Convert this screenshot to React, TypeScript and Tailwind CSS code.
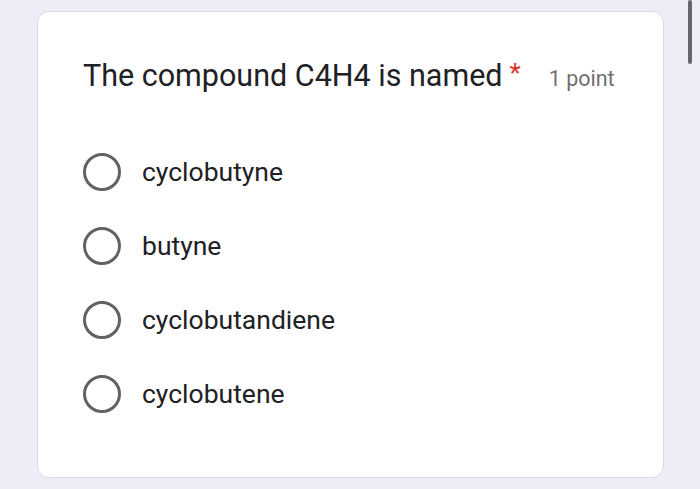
import React from "react";

const options = ["cyclobutyne", "butyne", "cyclobutandiene", "cyclobutene"];

const App: React.FC = () => {
  return (
    <div className="relative h-[489px] w-[700px] overflow-hidden bg-[#efebf7] pt-[11px] pl-[37px] font-['Roboto',sans-serif]">
      <div className="h-[467px] w-[627px] rounded-[12px] border border-[#dcd9e2] bg-white pt-[46px] pl-[45px]">
        <div className="flex items-baseline">
          <h1 className="text-[30.5px] leading-[36px] text-[#202124]">
            The compound C4H4 is named
          </h1>
          <span className="ml-[7px] self-start text-[26px] leading-[30px] text-[#d93025]">*</span>
          <span className="ml-[28px] text-[21.5px] leading-[36px] text-[#6f6f73]">
            1 point
          </span>
        </div>
        <div className="mt-[56px] flex flex-col gap-[36px]">
          {options.map((o) => (
            <label key={o} className="flex items-center">
              <span className="h-[38px] w-[38px] rounded-full border-[3px] border-[#5f6368]" />
              <span className="ml-[21px] text-[26.5px] leading-[38px] text-[#202124]">{o}</span>
            </label>
          ))}
        </div>
      </div>
      <div className="absolute top-0 left-[688px] h-[64px] w-[4px] rounded-full bg-[#67656b]" />
    </div>
  );
};

export default App;
